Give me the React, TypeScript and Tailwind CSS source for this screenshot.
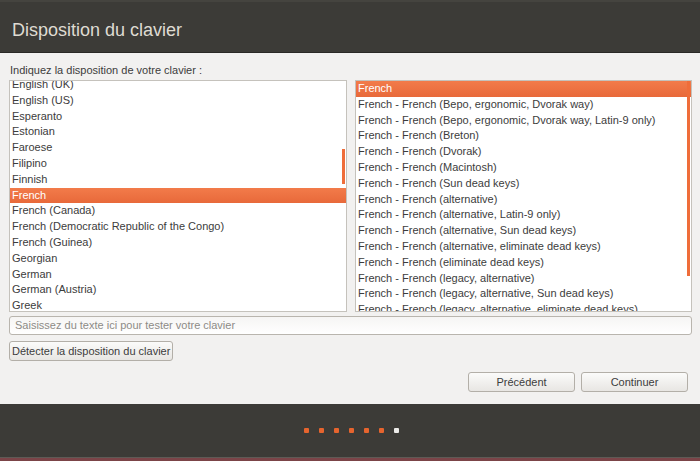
import React from 'react';

const leftItems = [
  'English (UK)',
  'English (US)',
  'Esperanto',
  'Estonian',
  'Faroese',
  'Filipino',
  'Finnish',
  'French',
  'French (Canada)',
  'French (Democratic Republic of the Congo)',
  'French (Guinea)',
  'Georgian',
  'German',
  'German (Austria)',
  'Greek',
];

const rightItems = [
  'French',
  'French - French (Bepo, ergonomic, Dvorak way)',
  'French - French (Bepo, ergonomic, Dvorak way, Latin-9 only)',
  'French - French (Breton)',
  'French - French (Dvorak)',
  'French - French (Macintosh)',
  'French - French (Sun dead keys)',
  'French - French (alternative)',
  'French - French (alternative, Latin-9 only)',
  'French - French (alternative, Sun dead keys)',
  'French - French (alternative, eliminate dead keys)',
  'French - French (eliminate dead keys)',
  'French - French (legacy, alternative)',
  'French - French (legacy, alternative, Sun dead keys)',
  'French - French (legacy, alternative, eliminate dead keys)',
];

function ListBox({ items, selected, offset, bar }: { items: string[]; selected: string; offset: string; bar: string }) {
  return (
    <div className="relative h-full overflow-hidden bg-white border border-[#c5c2bc]">
      <div className={offset}>
        {items.map((item, i) => (
          <div
            key={i}
            className={`h-[15.8px] leading-[15.8px] pl-[2px] whitespace-nowrap ${
              item === selected ? 'bg-gradient-to-b from-[#f27b4a] to-[#e8693a] text-white' : 'text-[#3c3c3c]'
            }`}
          >
            {item}
          </div>
        ))}
      </div>
      <div className={`absolute right-[1px] w-[3px] bg-[#ef6d3a] ${bar}`} />
    </div>
  );
}

export default function App() {
  return (
    <div
      className="w-[700px] h-[461px] flex flex-col bg-[#f2f1f0] overflow-hidden text-[11px]"
      style={{ fontFamily: '"Liberation Sans", Arial, sans-serif' }}
    >
      {/* Header */}
      <div className="h-[53px] shrink-0 bg-[#3c3b37] border-b border-[#2a2926] border-t-2 border-t-[#45443f]">
        <h1 className="pl-[12px] pt-[19px] text-[18px] text-[#dfdbd2] leading-none">Disposition du clavier</h1>
      </div>

      {/* Content */}
      <div className="flex-1 flex flex-col pl-[9px] pr-[8px] pt-[11px]">
        <div className="pl-[1px] h-[16px] leading-[12px] text-[#3c3c3c]">Indiquez la disposition de votre clavier :</div>

        <div className="flex gap-[8px] h-[232px]">
          <div className="w-[338px]">
            <ListBox items={leftItems} selected="French" offset="-mt-[4px]" bar="top-[68px] h-[35px]" />
          </div>
          <div className="flex-1">
            <ListBox items={rightItems} selected="French" offset="" bar="top-0 h-[195px]" />
          </div>
        </div>

        <div className="mt-[4px] h-[19px] rounded-[3px] border border-[#b9b5ae] bg-gradient-to-b from-[#f6f5f4] to-white pl-[5px] leading-[17px] text-[#8d8b87]">
          Saisissez du texte ici pour tester votre clavier
        </div>

        <div className="mt-[6px] flex">
          <button className="h-[20px] px-[2px] rounded-[3px] border border-[#b3afa8] bg-gradient-to-b from-[#fbfbfa] to-[#e8e6e3] text-[#3c3c3c] leading-[18px]">
            Détecter la disposition du clavier
          </button>
        </div>

        <div className="mt-[11px] flex justify-end gap-[6px] mr-[4px]">
          <button className="w-[107px] h-[20px] rounded-[3px] border border-[#b3afa8] bg-gradient-to-b from-[#fbfbfa] to-[#e8e6e3] text-[#3c3c3c] leading-[18px]">
            Précédent
          </button>
          <button className="w-[107px] h-[20px] rounded-[3px] border border-[#b3afa8] bg-gradient-to-b from-[#fbfbfa] to-[#e8e6e3] text-[#3c3c3c] leading-[18px]">
            Continuer
          </button>
        </div>
      </div>

      {/* Footer */}
      <div className="h-[57px] shrink-0 flex flex-col bg-[#3c3b37]">
        <div className="flex-1 flex items-center justify-center gap-[10px] pl-[2px]">
          {[0, 1, 2, 3, 4, 5].map(i => (
            <span key={i} className="w-[5px] h-[5px] rounded-[1px] bg-[#e6642e]" />
          ))}
          <span className="w-[5px] h-[5px] rounded-[1px] bg-[#ecebe8]" />
        </div>
        <div className="h-[1px] bg-[#5e5a55]" />
        <div className="h-[3px] bg-[#7b4448]" />
      </div>
    </div>
  );
}
